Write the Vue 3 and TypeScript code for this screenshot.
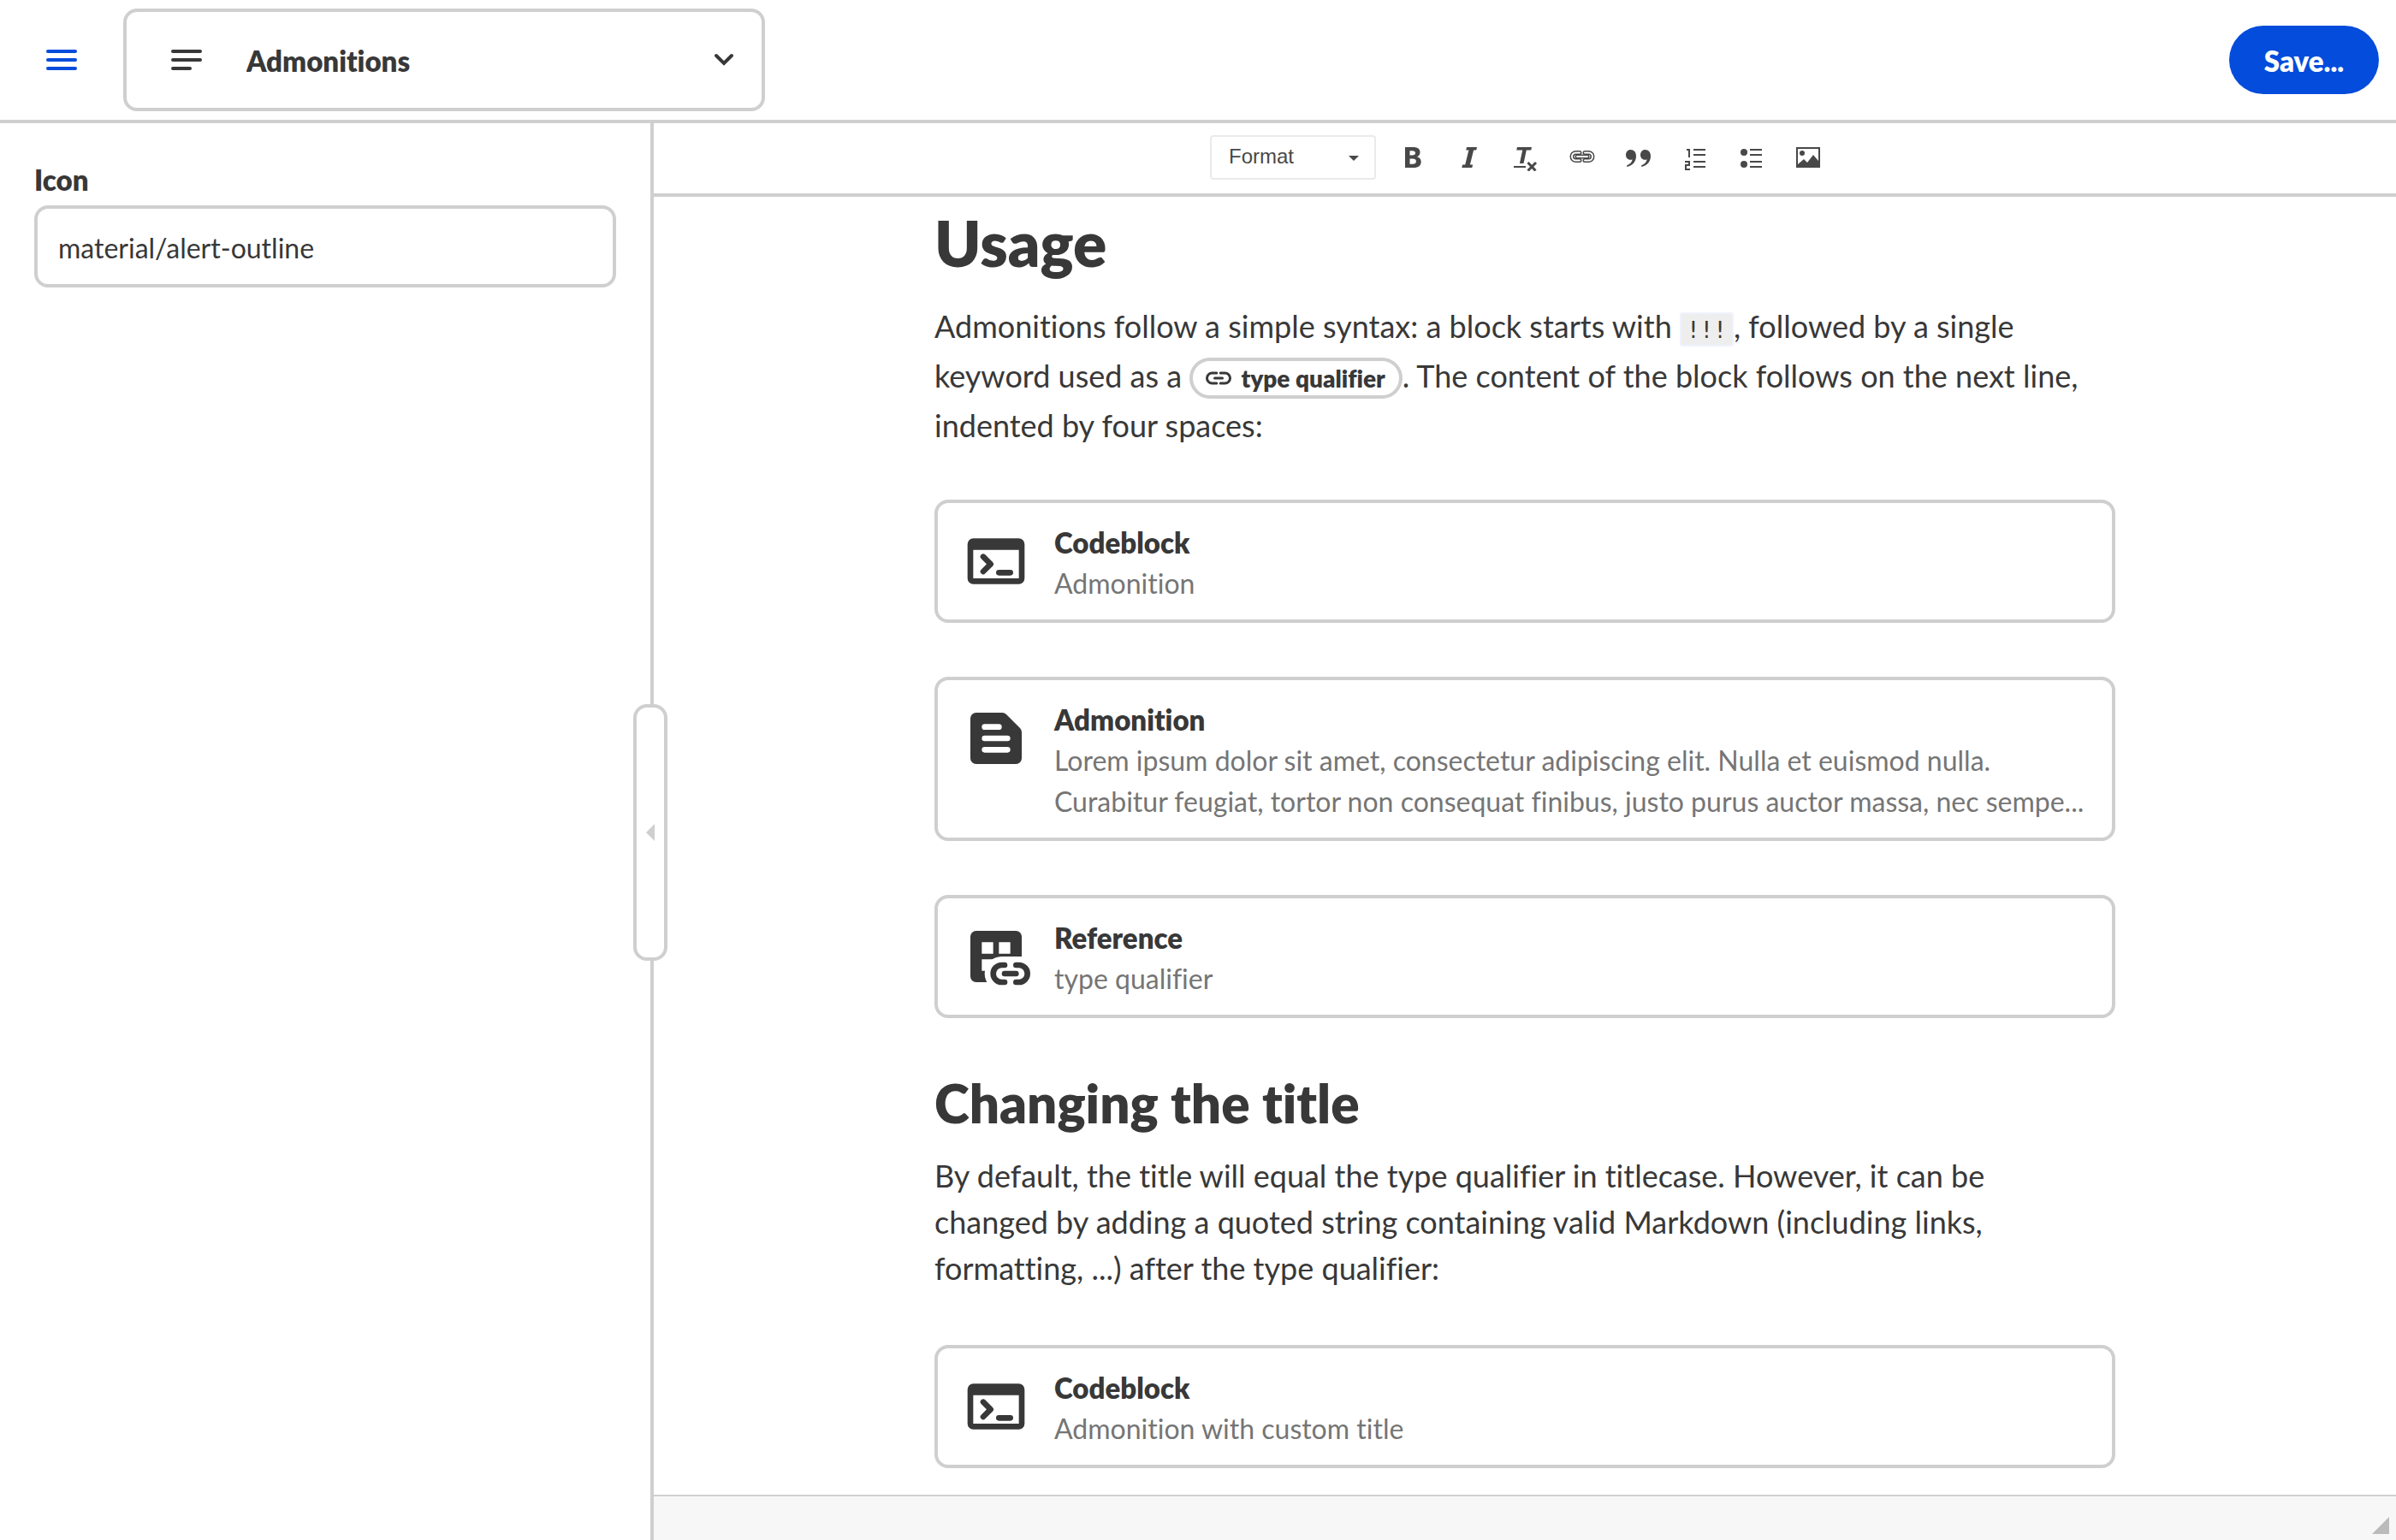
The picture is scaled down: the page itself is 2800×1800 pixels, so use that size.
<script setup lang="ts">
import { ref } from 'vue'

interface Block {
  icon: 'console' | 'document' | 'reference'
  title: string
  lines: string[]
}

const page = ref('Admonitions')
const icon = ref('material/alert-outline')
const format = ref('Format')

const usageBlocks: Block[] = [
  { icon: 'console', title: 'Codeblock', lines: ['Admonition'] },
  {
    icon: 'document',
    title: 'Admonition',
    lines: [
      'Lorem ipsum dolor sit amet, consectetur adipiscing elit. Nulla et euismod nulla.',
      'Curabitur feugiat, tortor non consequat finibus, justo purus auctor massa, nec sempe...',
    ],
  },
  { icon: 'reference', title: 'Reference', lines: ['type qualifier'] },
]
const titleBlocks: Block[] = [
  { icon: 'console', title: 'Codeblock', lines: ['Admonition with custom title'] },
]
const sections = [usageBlocks, titleBlocks]
</script>

<template>
  <div class="app">
    <header class="topbar">
      <button class="menu" type="button" aria-label="Menu">
        <svg width="48" height="48" viewBox="0 0 48 48"><path d="M8 14h32M8 24h32M8 34h32" /></svg>
      </button>
      <label class="picker">
        <svg class="picker-icon" width="48" height="48" viewBox="0 0 48 48"><path d="M8 14h32M8 24h32M8 34h20" /></svg>
        <select v-model="page" aria-label="Page">
          <option>Admonitions</option>
        </select>
        <svg class="picker-arrow" width="24" height="16" viewBox="0 0 24 16"><path d="M3 3l9 9 9-9" /></svg>
      </label>
      <button class="save" type="button">Save...</button>
    </header>

    <div class="body">
      <aside class="side">
        <label for="icon-field">Icon</label>
        <input id="icon-field" v-model="icon" type="text" />
        <button class="handle" type="button" aria-label="Collapse sidebar">
          <svg width="10" height="20" viewBox="0 0 10 20"><path d="M10 0v20L0 10z" /></svg>
        </button>
      </aside>

      <main class="editor">
        <div class="toolbar">
          <label class="format">
            <select v-model="format" aria-label="Format">
              <option>Format</option>
            </select>
            <svg width="12" height="6" viewBox="0 0 12 6"><path d="M0 0h12L6 6z" /></svg>
          </label>
          <div class="tools">
            <button type="button" aria-label="Bold">
              <svg viewBox="0 0 32 32"><path fill-rule="evenodd" d="M7 4h9.500c5 0 8 2 8 6 0 2.600-1.300 4.400-3.600 5.200 3 .8 4.800 2.800 4.800 5.800 0 4.500-3.200 7-8.600 7H7zM12.500 8.200v5.300h2.800c2.500 0 3.700-1 3.700-2.700s-1.200-2.600-3.600-2.600zM12.500 17.400v6.300h3.300c2.800 0 4.100-1.100 4.100-3.200 0-2-1.400-3.100-4.200-3.100z" /></svg>
            </button>
            <button type="button" aria-label="Italic">
              <svg viewBox="0 0 32 32"><path d="M13 4h12l-.8 3.500h-3.100L16.900 24.500h3.200L19.300 28H7.300l.8-3.500h3.100L15.400 7.500h-3.200z" /></svg>
            </button>
            <button type="button" aria-label="Remove format">
              <svg viewBox="0 0 32 32"><path d="M6 4h17l-.8 3.600h-5.400L13.500 23H8.900l3.300-15.400H5.200zM2 26h14v2H2z" /><path class="line" d="M18.500 22l9 9.500M28 22l-9.500 9.500" /></svg>
            </button>
            <button type="button" aria-label="Link">
              <svg viewBox="0 0 32 32">
                <path class="chain" d="M13 10.500H8.500a4.500 4.500 0 0 0 0 9H13M19 10.500h4.500a4.500 4.500 0 0 1 0 9H19" />
                <path class="chain-gap" d="M13 10.500H8.500a4.500 4.500 0 0 0 0 9H13M19 10.500h4.500a4.500 4.500 0 0 1 0 9H19" />
                <path class="bar" d="M10 15h12" />
                <path class="bar-gap" d="M10 15h12" />
              </svg>
            </button>
            <button type="button" aria-label="Quote">
              <svg viewBox="0 0 32 32"><path d="M6.500 7c4 0 6.500 3 6.500 7.400 0 6-3.900 10.900-10.600 12.600l-.4-1.500c4-1.600 6.300-4.200 6.600-7.200-.7.400-1.400.5-2.300.5C3.200 18.800 1 16.300 1 13s2.300-6 5.500-6zM23.500 7c4 0 6.500 3 6.500 7.400 0 6-3.900 10.900-10.600 12.600l-.4-1.500c4-1.600 6.300-4.200 6.600-7.200-.7.400-1.400.5-2.300.5-3.100 0-5.300-2.500-5.300-5.800s2.300-6 5.500-6z" /></svg>
            </button>
            <button type="button" aria-label="Numbered list">
              <svg viewBox="0 0 32 32"><path d="M14 6h14v2H14zM14 12h14v2H14zM14 20h14v2H14zM14 26h14v2H14z" /><path class="thin" d="M6 7h3v9M4 21h5v4H5v5h5" /></svg>
            </button>
            <button type="button" aria-label="Bulleted list">
              <svg viewBox="0 0 32 32"><circle cx="7" cy="10" r="4" /><circle cx="7" cy="24" r="4" /><path d="M14 6h14v2H14zM14 12h14v2H14zM14 20h14v2H14zM14 26h14v2H14z" /></svg>
            </button>
            <button type="button" aria-label="Image">
              <svg viewBox="0 0 32 32"><path fill-rule="evenodd" d="M2 4h28v24H2zM4 6v18l7-6 4 4 7-9 6 7V6z" /><circle cx="9" cy="11" r="3" /></svg>
            </button>
          </div>
        </div>

        <article class="content">
          <template v-for="(blocks, s) in sections" :key="s">
            <template v-if="s === 0">
              <h1>Usage</h1>
              <p class="lead">
                Admonitions follow a simple syntax: a block starts with <code>!!!</code>, followed by a single<br />
                keyword used as a
                <a class="chip" href="#"><svg width="36" height="36" viewBox="0 0 24 24"><path d="M10.500 16H7a4 4 0 0 1 0-8h3.500M13.500 8H17a4 4 0 0 1 0 8h-3.500M9 12h6" /></svg><span>type qualifier</span></a>. The content of the block follows on the next line,<br />
                indented by four spaces:
              </p>
            </template>
            <template v-else>
              <h2>Changing the title</h2>
              <p>
                By default, the title will equal the type qualifier in titlecase. However, it can be<br />
                changed by adding a quoted string containing valid Markdown (including links,<br />
                formatting, ...) after the type qualifier:
              </p>
            </template>
            <section v-for="b in blocks" :key="b.title" class="card">
              <svg v-if="b.icon === 'console'" width="80" height="80" viewBox="0 0 24 24">
                <path fill-rule="evenodd" d="M4 4h16a2 2 0 0 1 2 2v12a2 2 0 0 1-2 2H4a2 2 0 0 1-2-2V6a2 2 0 0 1 2-2zM4 8v10h16V8z" />
                <path class="stroke" d="M7.500 10.400l2.600 2.600-2.600 2.600M13 16h4" />
              </svg>
              <svg v-else-if="b.icon === 'document'" width="80" height="80" viewBox="0 0 24 24">
                <path d="M5 3h9.200a2 2 0 0 1 1.400.6l4.800 4.800a2 2 0 0 1 .6 1.400V19a2 2 0 0 1-2 2H5a2 2 0 0 1-2-2V5a2 2 0 0 1 2-2z" />
                <path class="stroke knock" d="M8 8h5M8 12h8M8 16h8" />
              </svg>
              <svg v-else width="80" height="80" viewBox="0 0 24 24">
                <path fill-rule="evenodd" d="M5 3h14a2 2 0 0 1 2 2v16H5a2 2 0 0 1-2-2V5a2 2 0 0 1 2-2zM7 7v4h4V7zM13 7v4h4V7zM7 13v4h4v-4z" />
                <path class="gap" d="M14 12h10v12H14a6 6 0 0 1 0-12z" />
                <path class="stroke" d="M15 15h-1a3 3 0 0 0 0 6h1M19 15h1a3 3 0 0 1 0 6h-1M15 18h4" />
              </svg>
              <div class="card-text">
                <h3>{{ b.title }}</h3>
                <div v-for="l in b.lines" :key="l" class="sub">{{ l }}</div>
              </div>
            </section>
          </template>
        </article>

        <footer class="status">
          <svg width="20" height="20" viewBox="0 0 20 20"><path d="M20 0v20H0z" /></svg>
        </footer>
      </main>
    </div>
  </div>
</template>

<style>
body {
  margin: 0;
  background: #fff;
}
</style>

<style scoped>
.app {
  --line: #cfcfcf;
  --ink: #383838;
  display: flex;
  flex-direction: column;
  min-height: 100vh;
  color: var(--ink);
  font-family: Lato, 'Open Sans', sans-serif;
  font-size: 32px;
  font-variant-ligatures: none;
}
.app * {
  box-sizing: border-box;
}
button,
select,
input {
  margin: 0;
  padding: 0;
  border: 0;
  background: none;
  color: inherit;
  font: inherit;
  font-variant-ligatures: none;
  appearance: none;
}
svg {
  display: block;
  flex: none;
}
.topbar {
  display: flex;
  align-items: center;
  height: 144px;
  padding: 0 20px 0 48px;
  border-bottom: 4px solid var(--line);
}
.menu svg path,
.picker svg path {
  fill: none;
  stroke: currentColor;
  stroke-width: 4;
  stroke-linecap: round;
}
.menu {
  color: #044cdb;
}
.picker {
  position: relative;
  width: 750px;
  height: 120px;
  margin-left: 48px;
  border: 4px solid var(--line);
  border-radius: 16px;
}
.picker select {
  width: 100%;
  height: 100%;
  padding: 2px 60px 0 140px;
  font-size: 33px;
  font-weight: 800;
}
.picker-icon,
.picker-arrow {
  position: absolute;
  pointer-events: none;
}
.picker-icon {
  left: 46px;
  top: 32px;
}
.picker-arrow {
  right: 32px;
  top: 48px;
}
.save {
  width: 175px;
  height: 80px;
  margin-left: auto;
  padding-top: 2px;
  border-radius: 40px;
  background: #044cdb;
  color: #fff;
  font-size: 33px;
  font-weight: 800;
}
.body {
  display: flex;
  flex: 1;
}
.side {
  position: relative;
  display: flex;
  flex-direction: column;
  width: 764px;
  flex: none;
  padding: 44px 40px;
  border-right: 4px solid var(--line);
}
.side label {
  font-size: 33px;
  line-height: 44px;
  font-weight: 800;
}
.side input {
  height: 96px;
  margin-top: 8px;
  padding: 2px 24px 0;
  border: 4px solid var(--line);
  border-radius: 16px;
}
.handle {
  position: absolute;
  top: 50%;
  right: -20px;
  display: flex;
  align-items: center;
  justify-content: center;
  width: 40px;
  height: 300px;
  transform: translateY(-50%);
  border: 4px solid var(--line);
  border-radius: 16px;
  background: #fff;
}
.handle path {
  fill: var(--line);
}
.editor {
  display: flex;
  flex: 1;
  flex-direction: column;
  min-width: 0;
}
.toolbar {
  display: flex;
  align-items: center;
  justify-content: center;
  gap: 27px;
  height: 86px;
  padding: 0 21px 2px 0;
  border-bottom: 4px solid var(--line);
  color: #484848;
}
.format {
  position: relative;
  width: 194px;
  height: 52px;
  border: 2px solid #eaeaea;
  border-radius: 4px;
  font-family: 'Liberation Sans', Arial, sans-serif;
  font-size: 24px;
}
.format select {
  width: 100%;
  height: 100%;
  padding: 0 40px 4px 20px;
}
.format svg {
  position: absolute;
  top: 22px;
  right: 18px;
  fill: #484848;
  pointer-events: none;
}
.tools {
  display: flex;
  gap: 34px;
}
.tools svg {
  width: 32px;
  height: 32px;
  fill: currentColor;
}
.tools .line {
  fill: none;
  stroke: currentColor;
  stroke-width: 3;
}
.tools .thin {
  fill: none;
  stroke: currentColor;
  stroke-width: 2;
}
.chain,
.chain-gap,
.bar,
.bar-gap {
  fill: none;
  stroke: currentColor;
  stroke-width: 5;
  stroke-linecap: round;
}
.chain-gap,
.bar-gap {
  stroke: #fff;
  stroke-width: 2;
}
.content {
  flex: 1;
  width: 1380px;
  max-width: 100%;
  margin: 0 auto;
  padding: 10px 0 31px;
}
h1,
h2,
h3,
p {
  margin: 0;
}
h1,
h2,
h3 {
  font-weight: 800;
}
h1 {
  font-size: 73px;
  line-height: 88px;
}
h2 {
  margin-top: 63px;
  font-size: 62px;
  line-height: 72px;
}
p {
  margin-top: 22px;
  font-size: 36px;
  line-height: 54px;
  white-space: nowrap;
}
p.lead {
  margin: 24px 0 -5px;
  line-height: 58px;
}
code {
  padding: 4px 6px 2px;
  border: 2px solid #f0f2fd;
  border-radius: 4px;
  background: #eee;
  font-family: 'DejaVu Sans Mono', monospace;
  font-size: 26px;
  line-height: 32px;
}
.chip {
  display: inline-flex;
  align-items: center;
  gap: 8px;
  height: 48px;
  padding: 0 16px 0 12px;
  border: 4px solid var(--line);
  border-radius: 24px;
  color: inherit;
  font-size: 28px;
  font-weight: 800;
  line-height: 40px;
  text-decoration: none;
}
.chip span {
  align-self: baseline;
}
.chip path {
  fill: none;
  stroke: currentColor;
  stroke-width: 2;
  stroke-linecap: round;
}
.card {
  display: flex;
  gap: 28px;
  margin-top: 63px;
  padding: 22px 20px 18px 28px;
  border: 4px solid var(--line);
  border-radius: 16px;
}
.card svg {
  margin-top: 6px;
  fill: var(--ink);
}
.card .stroke {
  fill: none;
  stroke: var(--ink);
  stroke-width: 2;
  stroke-linecap: round;
  stroke-linejoin: round;
}
.card .knock {
  stroke: #fff;
}
.card .gap {
  fill: #fff;
}
.card-text {
  min-width: 0;
  line-height: 48px;
}
h3 {
  font-size: 33px;
}
.sub {
  color: #757575;
  white-space: nowrap;
}
.status {
  display: flex;
  align-items: flex-end;
  justify-content: flex-end;
  height: 54px;
  padding: 8px;
  border-top: 2px solid var(--line);
  background: #f7f7f7;
}
.status svg {
  fill: #bbb;
}
</style>
